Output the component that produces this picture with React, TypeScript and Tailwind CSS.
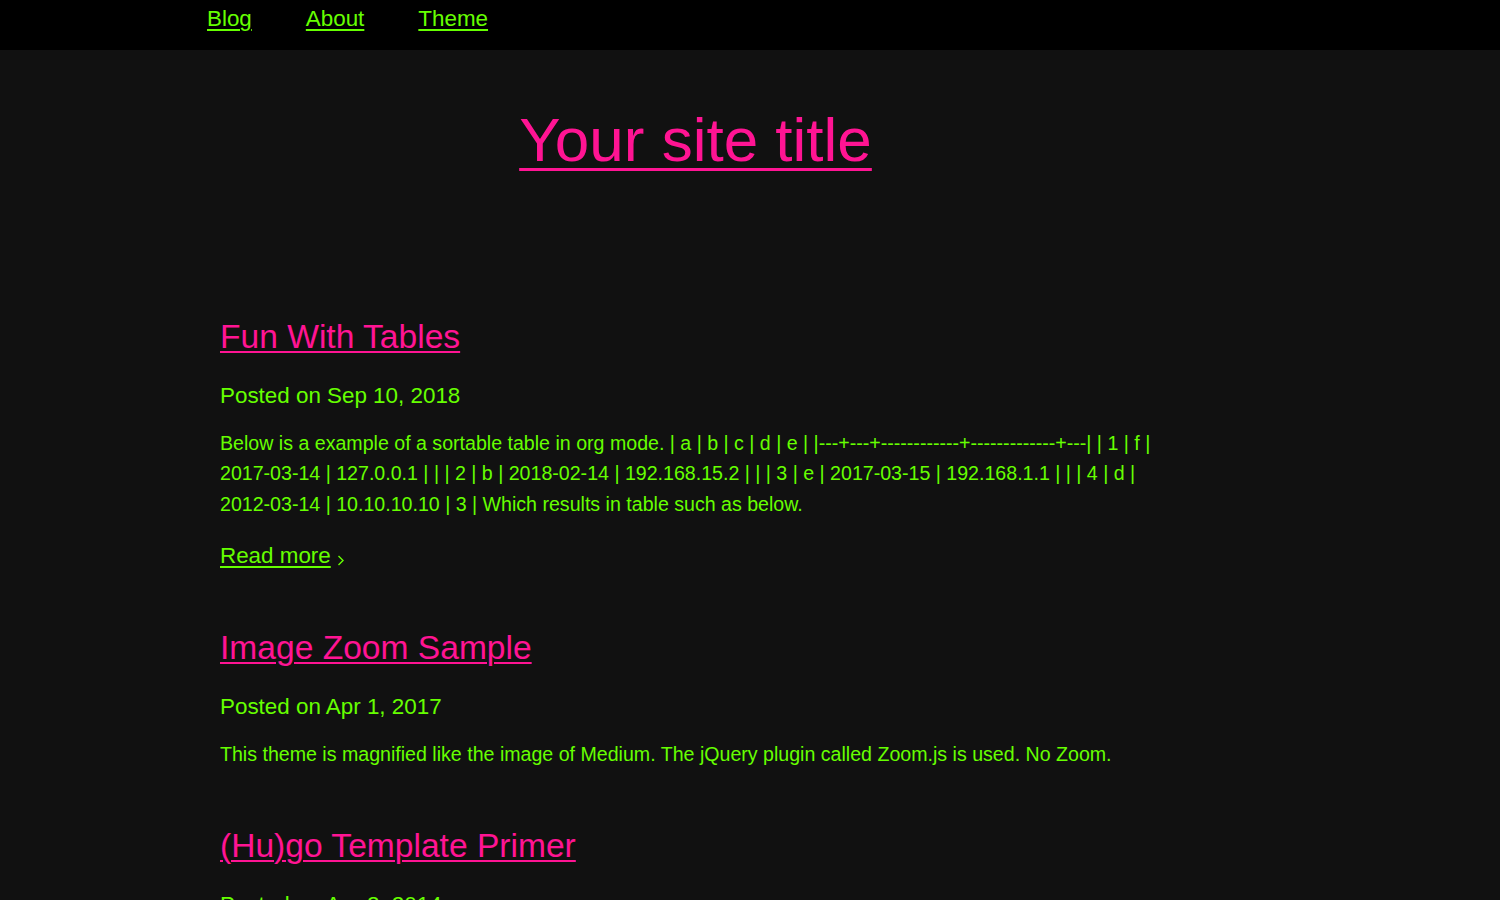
import React from "react";

const navItems = ["Blog", "About", "Theme"];

interface Post {
  title: string;
  date: string;
  summary: string;
  truncated: boolean;
}

const posts: Post[] = [
  {
    title: "Fun With Tables",
    date: "Sep 10, 2018",
    summary:
      "Below is a example of a sortable table in org mode. | a | b | c | d | e | |---+---+------------+-------------+---| | 1 | f | 2017-03-14 | 127.0.0.1 | | | 2 | b | 2018-02-14 | 192.168.15.2 | | | 3 | e | 2017-03-15 | 192.168.1.1 | | | 4 | d | 2012-03-14 | 10.10.10.10 | 3 | Which results in table such as below.",
    truncated: true,
  },
  {
    title: "Image Zoom Sample",
    date: "Apr 1, 2017",
    summary:
      "This theme is magnified like the image of Medium. The jQuery plugin called Zoom.js is used. No Zoom.",
    truncated: false,
  },
  {
    title: "(Hu)go Template Primer",
    date: "Apr 2, 2014",
    summary:
      "Hugo uses the excellent Go html/template library for its template engine. It is an extremely lightweight engine that provides a very small amount of logic.",
    truncated: true,
  },
];

function PostSummary({ post }: { post: Post }) {
  return (
    <article className="mb-[57px]">
      {/* Title */}
      <h2 className="text-[33.6px] leading-[40px] mb-[24px]">
        <a
          href="#"
          className="text-[#ff1493] underline decoration-2 underline-offset-[3px]"
        >
          {post.title}
        </a>
      </h2>
      <p className="text-[22.4px] leading-[30px] mb-[16.5px] text-[#66ff00]">
        Posted on {post.date}
      </p>
      <p className="text-[19.6px] leading-[30.5px] text-[#66ff00]">
        {post.summary}
      </p>
      {post.truncated && (
        <p className="mt-[22px] text-[22.4px] leading-[30px] flex items-end">
          <a
            href="#"
            className="text-[#66ff00] underline decoration-2 underline-offset-[3px]"
          >
            Read more
          </a>
          <svg
            width="8"
            height="12"
            viewBox="0 0 8 12"
            fill="none"
            stroke="#66ff00"
            strokeWidth="1.4"
            className="ml-[6px] mb-[5px]"
          >
            <path d="M1.5 2 L6 6.5 L1.5 11" />
          </svg>
        </p>
      )}
    </article>
  );
}

export default function App() {
  return (
    <div
      className="min-h-screen bg-[#111111]"
      style={{ fontFamily: '"Liberation Sans", Arial, sans-serif' }}
    >
      {/* Header nav */}
      <header className="h-[50px] bg-black">
        <nav className="ml-[207px] pt-[6px]">
          <ul className="flex gap-[54px] text-[22.4px] leading-[26px]">
            {navItems.map((item) => (
              <li key={item}>
                <a
                  href="#"
                  className="text-[#66ff00] underline decoration-2 underline-offset-[3px]"
                >
                  {item}
                </a>
              </li>
            ))}
          </ul>
        </nav>
      </header>

      <main className="ml-[220px] w-[951px]">
        {/* Site title */}
        <h1 className="mt-[55px] mb-[142px] text-center text-[62px] leading-[70px]">
          <a
            href="#"
            className="text-[#ff1493] underline decoration-[3px] underline-offset-[7px]"
          >
            Your site title
          </a>
        </h1>

        {posts.map((post) => (
          <PostSummary key={post.title} post={post} />
        ))}
      </main>
    </div>
  );
}
